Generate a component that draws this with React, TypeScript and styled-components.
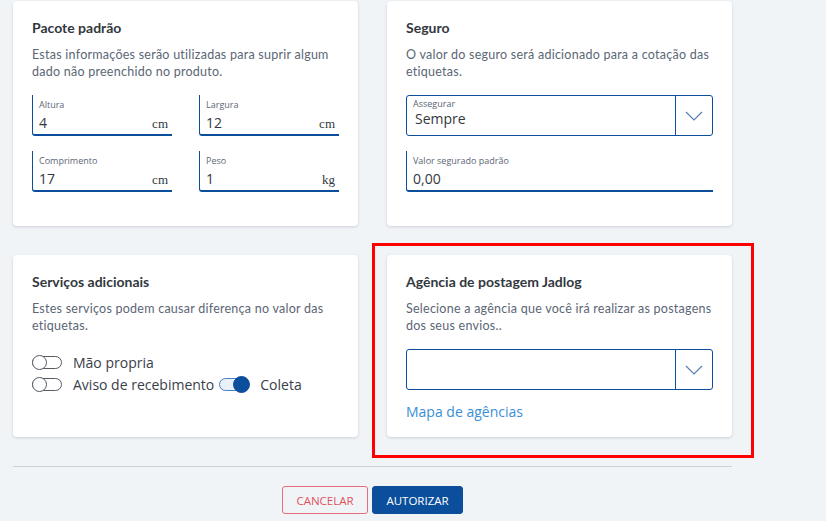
import React from "react";
import styled, { createGlobalStyle } from "styled-components";

const GlobalStyle = createGlobalStyle`
  html, body { margin: 0; padding: 0; background: #f1f4f7; }
  body { font-family: Lato, "Open Sans", sans-serif; }
  * { box-sizing: border-box; }
`;

const Page = styled.div`
  width: 719px;
  margin-left: 13px;
  padding-top: 1px;
`;

const Grid = styled.div`
  display: grid;
  grid-template-columns: 345px 345px;
  column-gap: 29px;
  row-gap: 29px;
`;

const CardWrap = styled.div`
  position: relative;
  display: flex;
`;

const Highlight = styled.div`
  position: absolute;
  left: -15px;
  top: -12px;
  right: -22px;
  bottom: -21px;
  border: 3px solid #ff0000;
  pointer-events: none;
`;

const Card = styled.section<{ $bottom: number }>`
  flex: 1;
  background: #fff;
  border-radius: 4px;
  box-shadow: 0 1px 3px rgba(40, 50, 70, 0.18);
  padding: 18px 19px ${(p) => p.$bottom}px 19px;
  display: flex;
  flex-direction: column;
`;

const Title = styled.h3`
  margin: 0;
  font-family: Lato, sans-serif;
  font-weight: 700;
  font-size: 14px;
  line-height: 18px;
  color: #333840;
`;

const Desc = styled.p`
  margin: 10px 0 0 0;
  font-family: Lato, sans-serif;
  font-size: 12.5px;
  line-height: 16.5px;
  letter-spacing: 0.25px;
  color: #5b6675;
`;

const FieldGrid = styled.div<{ $cols: number }>`
  margin-top: 15px;
  display: grid;
  grid-template-columns: repeat(${(p) => p.$cols}, 1fr);
  column-gap: 27px;
  row-gap: 15px;
`;

const Field = styled.div`
  height: 41px;
  border-left: 1px solid #0b4f9c;
  border-bottom: 2px solid #0b4f9c;
  border-bottom-left-radius: 3px;
  padding: 3px 4px 0 6px;
  display: flex;
  flex-direction: column;
`;

const FieldLabel = styled.span`
  font-family: "Open Sans", sans-serif;
  font-size: 9px;
  line-height: 13px;
  color: #5b6675;
`;

const FieldRow = styled.div`
  display: flex;
  align-items: baseline;
  justify-content: space-between;
  margin-top: 2px;
`;

const FieldValue = styled.span`
  font-family: "Open Sans", sans-serif;
  font-size: 14px;
  line-height: 19px;
  color: #333840;
`;

const Unit = styled.span`
  font-family: "Liberation Serif", serif;
  font-size: 13px;
  color: #333840;
`;

const Select = styled.div<{ $top: number }>`
  margin-top: ${(p) => p.$top}px;
  height: 41px;
  flex: none;
  border: 1px solid #0b4f9c;
  border-radius: 3px;
  display: flex;
`;

const SelectBody = styled.div`
  flex: 1;
  padding: 1px 6px 0 6px;
  display: flex;
  flex-direction: column;
`;

const SelectValue = styled.span`
  font-family: "Open Sans", sans-serif;
  font-size: 14px;
  line-height: 18px;
  color: #333840;
  padding-left: 2px;
`;

const SelectArrow = styled.div`
  width: 37px;
  border-left: 1px solid #0b4f9c;
  display: flex;
  align-items: center;
  justify-content: center;
`;

const SoloField = styled(Field)`
  margin-top: 15px;
`;

const Toggles = styled.div`
  margin-top: 20px;
  display: flex;
  flex-wrap: wrap;
  width: 290px;
  row-gap: 5px;
`;

const ToggleItem = styled.label`
  display: flex;
  align-items: center;
  gap: 10px;
  margin-right: 5px;
  font-family: "Open Sans", sans-serif;
  font-size: 14px;
  line-height: 17px;
  color: #3a404a;
`;

const Switch = styled.span`
  position: relative;
  width: 31px;
  height: 17px;
  flex: none;
`;

const Track = styled.span<{ $on: boolean }>`
  position: absolute;
  left: 0;
  top: 2px;
  width: ${(p) => (p.$on ? 26 : 30)}px;
  height: 13px;
  border-radius: 7px;
  border: 1px solid ${(p) => (p.$on ? "#4a7fc1" : "#555b63")};
  background: ${(p) => (p.$on ? "#e9f0f8" : "#fff")};
`;

const Knob = styled.span<{ $on: boolean }>`
  position: absolute;
  top: ${(p) => (p.$on ? 0 : 1)}px;
  left: ${(p) => (p.$on ? 14 : 0)}px;
  width: ${(p) => (p.$on ? 17 : 15)}px;
  height: ${(p) => (p.$on ? 17 : 15)}px;
  border-radius: 50%;
  background: ${(p) => (p.$on ? "#0b4f9c" : "#fff")};
  border: 1px solid ${(p) => (p.$on ? "#0b4f9c" : "#555b63")};
`;

const MapLink = styled.a`
  margin-top: 12px;
  font-family: "Open Sans", sans-serif;
  font-size: 14px;
  line-height: 20px;
  color: #3a8fd8;
  text-decoration: none;
`;

const Divider = styled.hr`
  margin: 29px 0 0 0;
  border: none;
  border-top: 1px solid #ccd1d8;
`;

const Actions = styled.div`
  margin-top: 19px;
  display: flex;
  justify-content: center;
  gap: 4px;
`;

const Button = styled.button<{ $primary?: boolean }>`
  width: ${(p) => (p.$primary ? 91 : 86)}px;
  height: 28px;
  padding: 0;
  border-radius: 3px;
  font-family: "Open Sans", sans-serif;
  font-size: 11.5px;
  text-transform: uppercase;
  cursor: pointer;
  border: 1px solid ${(p) => (p.$primary ? "#0b4f9c" : "#e4707a")};
  background: ${(p) => (p.$primary ? "#0b4f9c" : "transparent")};
  color: ${(p) => (p.$primary ? "#fff" : "#e0525e")};
`;

const Chevron = () => (
  <svg width="18" height="10" viewBox="0 0 18 10" fill="none">
    <path d="M1 1 L9 9 L17 1" stroke="#5a7fb0" strokeWidth="1.2" />
  </svg>
);

const Toggle = ({ on, label }: { on: boolean; label: string }) => (
  <ToggleItem>
    <Switch>
      <Track $on={on} />
      <Knob $on={on} />
    </Switch>
    {label}
  </ToggleItem>
);

const InputField = ({ label, value, unit }: { label: string; value: string; unit?: string }) => (
  <Field>
    <FieldLabel>{label}</FieldLabel>
    <FieldRow>
      <FieldValue>{value}</FieldValue>
      {unit && <Unit>{unit}</Unit>}
    </FieldRow>
  </Field>
);

export default function App() {
  return (
    <Page>
      <GlobalStyle />
      <Grid>
        <CardWrap>
          <Card $bottom={34}>
            <Title>Pacote padrão</Title>
            <Desc>Estas informações serão utilizadas para suprir algum dado não preenchido no produto.</Desc>
            <FieldGrid $cols={2}>
              <InputField label="Altura" value="4" unit="cm" />
              <InputField label="Largura" value="12" unit="cm" />
              <InputField label="Comprimento" value="17" unit="cm" />
              <InputField label="Peso" value="1" unit="kg" />
            </FieldGrid>
          </Card>
        </CardWrap>
        <CardWrap>
          <Card $bottom={34}>
            <Title>Seguro</Title>
            <Desc>O valor do seguro será adicionado para a cotação das etiquetas.</Desc>
            <Select $top={15}>
              <SelectBody>
                <FieldLabel>Assegurar</FieldLabel>
                <SelectValue>Sempre</SelectValue>
              </SelectBody>
              <SelectArrow>
                <Chevron />
              </SelectArrow>
            </Select>
            <SoloField>
              <FieldLabel>Valor segurado padrão</FieldLabel>
              <FieldRow>
                <FieldValue>0,00</FieldValue>
              </FieldRow>
            </SoloField>
          </Card>
        </CardWrap>
        <CardWrap>
          <Card $bottom={15}>
            <Title>Serviços adicionais</Title>
            <Desc>Estes serviços podem causar diferença no valor das etiquetas.</Desc>
            <Toggles>
              <Toggle on={false} label="Mão propria" />
              <Toggle on={false} label="Aviso de recebimento" />
              <Toggle on={true} label="Coleta" />
            </Toggles>
          </Card>
        </CardWrap>
        <CardWrap>
          <Highlight />
          <Card $bottom={15}>
            <Title>Agência de postagem Jadlog</Title>
            <Desc>Selecione a agência que você irá realizar as postagens dos seus envios..</Desc>
            <Select $top={15}>
              <SelectBody />
              <SelectArrow>
                <Chevron />
              </SelectArrow>
            </Select>
            <MapLink href="#">Mapa de agências</MapLink>
          </Card>
        </CardWrap>
      </Grid>
      <Divider />
      <Actions>
        <Button>Cancelar</Button>
        <Button $primary>Autorizar</Button>
      </Actions>
    </Page>
  );
}
